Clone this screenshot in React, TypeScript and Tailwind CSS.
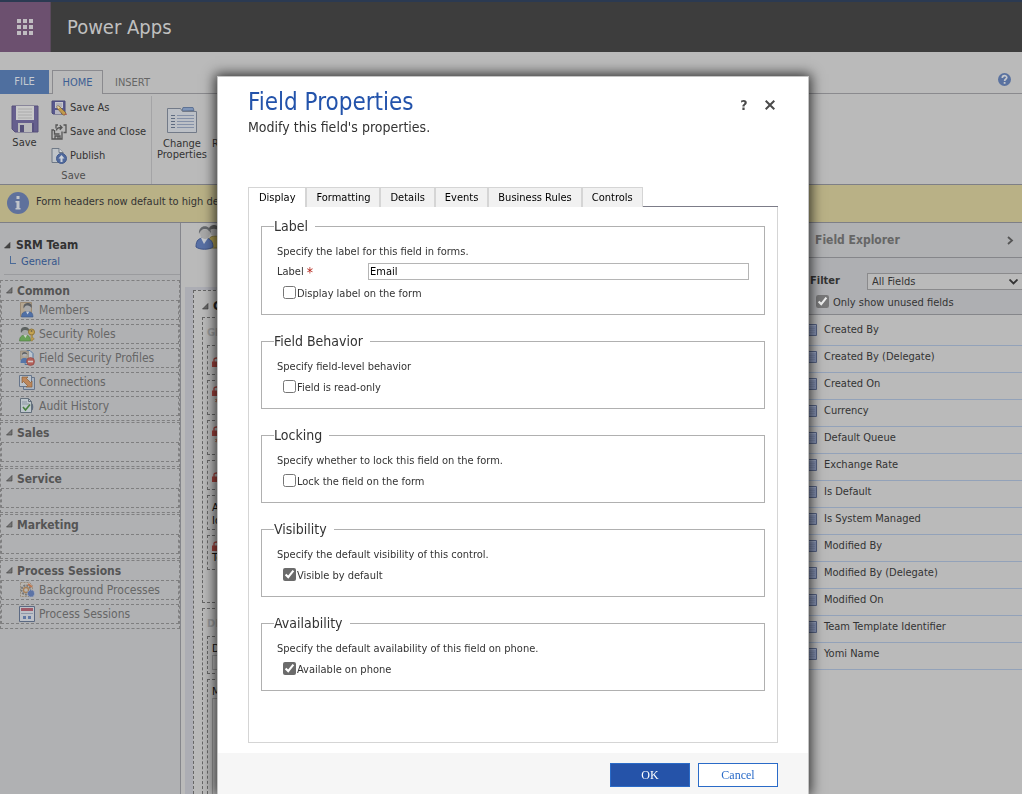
import type { ReactNode } from "react";

type IconProps = { className?: string };

const WaffleIcon = () => (
  <svg width="16" height="16" viewBox="0 0 16 16" fill="#c0bcc1" aria-hidden="true">
    {[0, 6, 12].map((y) => [0, 6, 12].map((x) => <rect key={`${x}-${y}`} x={x} y={y} width="4" height="4" />))}
  </svg>
);

const SaveIcon = () => (
  <svg width="28" height="28" viewBox="0 0 28 28" aria-hidden="true">
    <path d="M1 1h26v26H4l-3-3z" fill="#665f8e" stroke="#57517b" />
    <rect x="5" y="1" width="18" height="14" fill="#c9c9c9" />
    <path d="M7 4h14M7 7h14M7 10h14M7 13h14" stroke="#aaa" />
    <rect x="7" y="18" width="14" height="9" fill="#b9b9bb" />
    <rect x="9" y="20" width="4" height="7" fill="#55507a" />
    <path d="M22 18v9" stroke="#4b4570" />
  </svg>
);

const SaveAsIcon = () => (
  <svg width="16" height="16" viewBox="0 0 16 16" aria-hidden="true">
    <path d="M1 1h13v13H2l-1-1z" fill="#58588f" stroke="#4a4a78" />
    <rect x="4" y="2" width="8" height="6" fill="#c6c6cc" />
    <path d="M5 4h6M5 6h6" stroke="#9a9aa8" />
    <rect x="4" y="10" width="6" height="4" fill="#b5b5c0" />
    <path d="M6 6l2 0 7 7-1 2-2 0-6-7z" fill="#c29a4c" stroke="#77603a" strokeWidth=".7" />
    <path d="M6 6l3 1-2 2z" fill="#ddd1b4" />
    <path d="M13 15l2-2 1 2z" fill="#a95c55" />
  </svg>
);

const SaveCloseIcon = () => (
  <svg width="16" height="16" viewBox="0 0 16 16" fill="none" stroke="#555" strokeWidth="1.3" aria-hidden="true">
    <path d="M3 6H1v9h10V7.500M3.500 6v4h5M4 15v-3h5v3M7 12.500v2" />
    <path d="M5 4.500V1h2M12.500 1H15v7.500h-2.500" />
    <path d="M5.500 6.500c0-2.500 2-3 5-3M8.800 1.300l2.200 2.200-2.200 2.200" />
  </svg>
);

const PublishIcon = () => (
  <svg width="16" height="16" viewBox="0 0 16 16" aria-hidden="true">
    <path d="M1 .5h7l4 4v10H1z" fill="#bfc4c9" stroke="#6f7986" />
    <path d="M8 .5v4h4" fill="#d3d6da" stroke="#6f7986" />
    <circle cx="10.500" cy="10.500" r="5" fill="#50699d" stroke="#435b8c" />
    <path d="M10.500 7l3 3.500h-2V14h-2v-3.500h-2z" fill="#ccd2db" />
  </svg>
);

const ChangeIcon = () => (
  <svg width="30" height="28" viewBox="0 0 30 28" aria-hidden="true">
    <path d="M15 5l1-3.500h10l1 3z" fill="#7f95b8" stroke="#5f7394" />
    <path d="M.5 2.500h13l2 3h14v21H.5z" fill="#bcc0c6" stroke="#727a88" />
    <path d="M10 9.500h17M10 12.500h17M10 15.500h17M10 18.500h17M10 21.500h17" stroke="#8591a8" />
    <path d="M4 9.500h4M4 12.500h4M4 15.500h4M4 18.500h4M4 21.500h4" stroke="#5e6b80" />
  </svg>
);

const InfoIcon = () => (
  <svg width="22" height="22" viewBox="0 0 22 22" aria-hidden="true">
    <circle cx="11" cy="11" r="11" fill="#5f719c" />
    <rect x="9.500" y="4" width="3" height="3" fill="#c2c5ca" />
    <path d="M8.500 9h4v7h1v1.500h-5V16h1v-5.500h-1z" fill="#c2c5ca" />
  </svg>
);

const HelpIcon = () => (
  <svg width="13" height="13" viewBox="0 0 13 13" aria-hidden="true">
    <circle cx="6.500" cy="6.500" r="6.500" fill="#5a72a0" />
    <path d="M4.300 5c0-3 4.500-3 4.500-.4C8.800 6 6.600 6 6.600 8" fill="none" stroke="#c5c8cd" strokeWidth="1.700" />
    <rect x="5.700" y="9" width="1.800" height="1.800" fill="#c5c8cd" />
  </svg>
);

const Caret = ({ className }: IconProps) => (
  <svg width="7" height="7" viewBox="0 0 7 7" className={className} aria-hidden="true">
    <path d="M6 .5V6H.5z" fill="currentColor" stroke="#3b3b3b" strokeWidth=".6" />
  </svg>
);

const MembersIcon = () => (
  <svg width="16" height="16" viewBox="0 0 16 16" aria-hidden="true">
    <path d="M1.500.5h11v14h-11z" fill="#b4a691" stroke="#9b8b75" />
    <path d="M2.500 15c0-5 3-5.500 6-5.500s5.500 1 5.500 5.500z" fill="#5070a6" stroke="#405a88" strokeWidth=".6" />
    <path d="M7 9.500l1.500 3 2-3z" fill="#cbd0d8" />
    <circle cx="8.500" cy="6" r="3.300" fill="#a8a9aa" />
    <path d="M4.500 6.500C4 1.500 7 1 9 1s4.500 1 3.500 5c-1-2-3-2.500-5-2.500-1 0-1.500 1-3 3z" fill="#5d6063" />
  </svg>
);

const SecurityIcon = () => (
  <svg width="16" height="16" viewBox="0 0 16 16" aria-hidden="true">
    <path d="M.5 15c0-5 3-6 6-6s5 2 5 6z" fill="#6aa158" stroke="#4c7a40" strokeWidth=".6" />
    <path d="M4.500 9l2 3 1.500-3z" fill="#cbd3c8" />
    <circle cx="6" cy="6" r="3.200" fill="#a5a7a7" />
    <path d="M2 7C1 1.500 4 1 6 1s5 1 4 5c-1-2-3-2-4.500-2S3 5.500 2 7z" fill="#5d6260" />
    <circle cx="12.500" cy="6" r="3" fill="#c4a352" stroke="#8f773a" />
    <circle cx="12.500" cy="5" r="1" fill="#776a48" />
    <path d="M12 9v6h1.500v-1.500h1.500V12h-1.500V9z" fill="#c4a352" stroke="#8f773a" strokeWidth=".5" />
  </svg>
);

const ProfileIcon = () => (
  <svg width="16" height="16" viewBox="0 0 16 16" aria-hidden="true">
    <path d="M8 .5h3l3 3v11H6z" fill="#bcc5cf" stroke="#55779f" />
    <path d="M1.500 1h8v9h-8z" fill="#a99f90" stroke="#8f8473" strokeWidth=".6" />
    <circle cx="5.500" cy="4.500" r="2.300" fill="#aeb0b1" />
    <path d="M3 5c-.5-4 5-4 5.500-.5-2-1-4-1-5.500.5z" fill="#5c6064" />
    <path d="M1.500 13c0-4 1.500-5 4-5s4 1 4 5z" fill="#5575a8" />
    <circle cx="11.500" cy="11.500" r="4" fill="#b2605a" stroke="#91453f" strokeWidth=".6" />
    <path d="M9 11.500h5" stroke="#d3cbca" strokeWidth="1.600" />
  </svg>
);

const ConnectionsIcon = () => (
  <svg width="16" height="16" viewBox="0 0 16 16" aria-hidden="true">
    <path d="M4.500 3.500h11v12h-11z" fill="#aab4c1" stroke="#66758b" />
    <path d="M.5 1.500h12v11H.5z" fill="#bcc2c9" stroke="#66758b" />
    <path d="M3 3h6l-1.500 1.500 4 4L13 7v6H7l1.500-1.500-4-4L3 9z" fill="#bd875b" stroke="#875b38" strokeWidth=".7" />
  </svg>
);

const AuditIcon = () => (
  <svg width="16" height="16" viewBox="0 0 16 16" aria-hidden="true">
    <path d="M10 4c5 0 5 10 0 10z" fill="#7d8ba0" stroke="#536276" />
    <path d="M1.500.5h8l3 3v11h-11z" fill="#bdc6cc" stroke="#64707c" />
    <path d="M9.500.5v3h3" fill="none" stroke="#64707c" />
    <path d="M3 4h5M3 6h7" stroke="#8b97a3" />
    <path d="M4 9l2.500 3L11 6.500" fill="none" stroke="#47803f" strokeWidth="1.600" />
  </svg>
);

const ProcessIcon = () => (
  <svg width="16" height="16" viewBox="0 0 16 16" aria-hidden="true">
    <path d="M1.500.5h9l3 3v11h-12z" fill="#b8b5b0" stroke="#998c7c" strokeDasharray="2 1" />
    <circle cx="7" cy="8" r="4.500" fill="none" stroke="#777" strokeWidth="2" strokeDasharray="2 1" />
    <circle cx="7" cy="8" r="2.500" fill="none" stroke="#a78057" strokeWidth="1.300" />
    <path d="M9 2l4 3" stroke="#bd7650" strokeWidth="2" />
    <circle cx="12" cy="11.500" r="3.500" fill="#5c73a6" stroke="#aeb6c7" strokeWidth="1" strokeDasharray="1 1" />
  </svg>
);

const SessionsIcon = () => (
  <svg width="16" height="16" viewBox="0 0 16 16" aria-hidden="true">
    <path d="M.5.5h15v15H.5z" fill="#bdc1c8" stroke="#5c6a83" />
    <path d="M2 2h12v3H2z" fill="#a05a68" />
    <path d="M2 7.500h12" stroke="#8e98aa" />
    <path d="M4 10h3v3H4zM9 10h3v3H9z" fill="#6179a4" />
  </svg>
);

const PeopleIcon = () => (
  <svg width="32" height="30" viewBox="0 0 32 30" aria-hidden="true">
    <path d="M12 25c0-9 3-12 8-12s8 3 8 12z" fill="#aa9a50" stroke="#80743e" />
    <circle cx="19" cy="8" r="4.500" fill="#a5a5a5" />
    <path d="M13.500 8c0-8 11-8 11 0-4-3-7-3-11 0z" fill="#5b5b5b" />
    <path d="M1 24c0-7 3-9 8-9s9 2 9 9c-4 3-13 3-17 0z" fill="#5870a5" stroke="#3f5488" />
    <path d="M6 15l3 6 4-6z" fill="#c7cbd2" />
    <path d="M5 9c0-3 10-3 10 1 0 3-2 6-5 6s-5-3-5-7z" fill="#a9a9a9" />
    <path d="M4 11C3 1 16 1 16 10c-2-2-3-4-6-4-3 0-5 2-6 5z" fill="#66696d" />
  </svg>
);

const FieldIcon = () => (
  <svg width="14" height="12" viewBox="0 0 14 12" aria-hidden="true">
    <path d="M.5.5h13v11H.5z" fill="#8793b4" stroke="#566384" />
    <path d="M1 4.500h11M1 6.500h11M1 8.500h11" stroke="#7c89aa" />
    <path d="M1 1.500h12" stroke="#9ca7c2" />
  </svg>
);

const LockIcon = () => (
  <svg width="9" height="10" viewBox="0 0 9 10" className="shrink-0" aria-hidden="true">
    <path d="M2 5V2.500C2 .5 7 .5 7 2.500V5" fill="none" stroke="#a3433d" strokeWidth="1.300" />
    <rect x="0" y="4.500" width="9" height="5.500" fill="#a3433d" />
  </svg>
);

const navGroups: { title: string; items: { name: string; icon: ReactNode }[] }[] = [
  {
    title: "Common",
    items: [
      { name: "Members", icon: <MembersIcon /> },
      { name: "Security Roles", icon: <SecurityIcon /> },
      { name: "Field Security Profiles", icon: <ProfileIcon /> },
      { name: "Connections", icon: <ConnectionsIcon /> },
      { name: "Audit History", icon: <AuditIcon /> },
    ],
  },
  { title: "Sales", items: [] },
  { title: "Service", items: [] },
  { title: "Marketing", items: [] },
  {
    title: "Process Sessions",
    items: [
      { name: "Background Processes", icon: <ProcessIcon /> },
      { name: "Process Sessions", icon: <SessionsIcon /> },
    ],
  },
];

const fields = [
  "Created By",
  "Created By (Delegate)",
  "Created On",
  "Currency",
  "Default Queue",
  "Exchange Rate",
  "Is Default",
  "Is System Managed",
  "Modified By",
  "Modified By (Delegate)",
  "Modified On",
  "Team Template Identifier",
  "Yomi Name",
];

const tabs = ["Display", "Formatting", "Details", "Events", "Business Rules", "Controls"];

const Header = () => (
  <header className="flex h-[52px] shrink-0 border-t-2 border-[#2b3a52] bg-[#3d3d3d]">
    <button aria-label="App launcher" className="flex w-[51px] items-center justify-center border-r border-[#5a4a5c] bg-[#6c506f]">
      <WaffleIcon />
    </button>
    <span className="flex items-center pl-4 text-[20px] text-[#c0c0c0]">Power Apps</span>
  </header>
);

const SmallAction = ({ icon, label }: { icon: ReactNode; label: string }) => (
  <button className="flex h-6 items-center gap-[3px] whitespace-nowrap">
    {icon}
    {label}
  </button>
);

const Ribbon = () => (
  <div className="flex h-[132px] shrink-0 flex-col pt-[18px] text-[11px] text-[#333]">
    <div className="flex h-6 shrink-0">
      <button className="w-[49px] bg-[#4f6f9f] pt-px text-[#c5cad1]">FILE</button>
      <span className="w-[3px] border-b border-[#8a8a8e]" />
      <button className="w-[51px] border-x border-t border-[#8a8a8e] pt-px text-[#3d5f94]">HOME</button>
      <button className="border-b border-[#8a8a8e] px-3 pt-1 text-[#666]">INSERT</button>
      <span className="flex flex-1 items-start justify-end border-b border-[#8a8a8e] pt-[3px] pr-[11px]">
        <button aria-label="Help">
          <HelpIcon />
        </button>
      </span>
    </div>
    <div className="flex flex-1 pt-[2px]">
      <div className="flex w-[152px] flex-col border-r border-[#a4a4a6]">
        <div className="flex">
          <button className="flex w-[49px] flex-col items-center gap-1 pt-[9px]">
            <SaveIcon />
            <span className="leading-3">Save</span>
          </button>
          <div className="flex flex-col pl-[2px]">
            <SmallAction icon={<SaveAsIcon />} label="Save As" />
            <SmallAction icon={<SaveCloseIcon />} label="Save and Close" />
            <SmallAction icon={<PublishIcon />} label="Publish" />
          </div>
        </div>
        <span className="pr-1 text-center leading-4 text-[#4f4f4f]">Save</span>
      </div>
      <button className="flex w-[60px] flex-col items-center gap-1 self-start pt-[10px]">
        <ChangeIcon />
        <span className="leading-[11px]">Change Properties</span>
      </button>
      <button className="flex w-10 flex-col items-center gap-1 self-start pt-[10px]">
        <ChangeIcon />
        <span className="leading-[11px]">Remove</span>
      </button>
    </div>
  </div>
);

const Sidebar = () => (
  <nav className="w-[181px] shrink-0 border-r border-[#85868c] bg-[#b0b1b3]">
    <div className="ml-1 h-[52px] border-b border-[#9a9b9e] pt-[14px]">
      <div className="flex items-center gap-[5px] text-[12px] leading-4 font-bold text-[#333]">
        <Caret className="text-[#444]" />
        SRM Team
      </div>
      <a href="#general" className="ml-[6px] flex items-center gap-[5px] pt-px text-[11px] leading-4 text-[#34568c]">
        <span className="mb-1 h-2 w-[6px] border-b border-l border-[#4a6a98]" />
        General
      </a>
    </div>
    <div className="h-[5px]" />
    {navGroups.map((group) => (
      <section key={group.title} className="mb-px border border-dashed border-[#7f7f80]">
        <h3 className="flex h-[19px] items-center gap-1 pl-[5px] text-[12px] font-bold text-[#555]">
          <Caret className="text-[#777]" />
          {group.title}
        </h3>
        {group.items.length === 0 && <div className="mb-1 h-5 border border-dashed border-[#7f7f80]" />}
        {group.items.map((item) => (
          <a
            key={item.name}
            href="#item"
            className="mb-1 flex h-5 items-center gap-1 border border-dashed border-[#7f7f80] pl-[17px] text-[12px] whitespace-nowrap text-[#666]"
          >
            {item.icon}
            {item.name}
          </a>
        ))}
      </section>
    ))}
  </nav>
);

const FormField = ({ locked, children }: { locked?: boolean; children?: ReactNode }) => (
  <div
    className={
      children
        ? "flex h-[35px] flex-col overflow-hidden border border-dashed border-[#666] pt-[5px] pl-1 text-[11px] leading-[13px] text-[#111]"
        : "flex h-[30px] flex-col justify-center border border-dashed border-[#666] pt-1 pl-1"
    }
  >
    {locked && <LockIcon />}
    {children}
  </div>
);

const Required = () => <span className="pl-[3px] text-[#a02018]">*</span>;

const Canvas = () => (
  <main className="flex min-w-0 flex-1 flex-col pl-1">
    <div className="h-16 pl-[10px]">
      <PeopleIcon />
    </div>
    <div className="flex flex-1 flex-col bg-[#acadb4] pt-[3px] pl-2">
      <div className="flex flex-1 flex-col border-t border-l border-dashed border-[#666] bg-[#bababa] pt-1 pl-2">
        <h2 className="flex h-[22px] items-center gap-1 text-[13px] font-bold text-[#222]">
          <Caret className="text-[#666]" />
          General
        </h2>
        <section className="mb-[5px] flex h-[286px] flex-col gap-[5px] border border-dashed border-[#666] pl-1">
          <h3 className="h-[22px] pt-2 text-[11px] leading-[14px] font-bold text-[#999]">GENERAL</h3>
          <FormField locked />
          <FormField locked>
            <Required />
          </FormField>
          <FormField locked>
            <Required />
          </FormField>
          <FormField locked />
          <FormField>
            Administrator
            <br />
            Identifier
          </FormField>
          <FormField locked>Team Type</FormField>
        </section>
        <section className="flex flex-1 flex-col gap-[5px] border-t border-l border-dashed border-[#666] pl-1">
          <h3 className="h-[22px] pt-2 text-[11px] leading-[14px] font-bold text-[#999]">DETAILS</h3>
          <div className="border border-dashed border-[#666] pt-[5px] pb-[3px] pl-1 text-[11px] leading-[13px] text-[#111]">
            Description
            <div className="h-[15px] border border-[#949494]" />
          </div>
          <div className="flex flex-1 flex-col border-t border-l border-dashed border-[#666] pt-[5px] pl-1 text-[11px] leading-[13px] text-[#111]">
            Members
            <div className="flex-1 border-t border-l border-[#949494]" />
          </div>
        </section>
      </div>
    </div>
  </main>
);

const Explorer = () => (
  <aside className="w-[222px] shrink-0 text-[11px] text-[#333]">
    <div className="flex h-[35px] items-center justify-between border-b border-[#85868a] bg-[#b0b1b3] pr-2 pl-[15px]">
      <h2 className="text-[12px] font-bold text-[#666]">Field Explorer</h2>
      <button aria-label="Collapse">
        <svg width="7" height="9" viewBox="0 0 7 9" fill="none" stroke="#555" strokeWidth="1.800" aria-hidden="true">
          <path d="M1 1l4 3.500L1 8" />
        </svg>
      </button>
    </div>
    <div className="h-[57px] border-b border-[#85868a] bg-[#aeafb2] pt-[15px] pl-[10px]">
      <div className="flex items-center">
        <label htmlFor="filter" className="w-[57px] font-bold">
          Filter
        </label>
        <div className="relative flex-1">
          <select id="filter" defaultValue="all" className="block h-[17px] w-full appearance-none border border-r-0 border-[#8a8a8c] bg-[#bababa] pl-1">
            <option value="all">All Fields</option>
          </select>
          <svg width="9" height="6" viewBox="0 0 9 6" fill="none" stroke="#333" strokeWidth="1.800" className="pointer-events-none absolute top-[6px] right-1" aria-hidden="true">
            <path d="M.5.5l4 4 4-4" />
          </svg>
        </div>
      </div>
      <label className="flex items-start gap-1 pt-[5px] pl-[6px] leading-4">
        <input type="checkbox" defaultChecked className="size-[13px] accent-[#6b6b6b] opacity-80" />
        Only show unused fields
      </label>
    </div>
    <ul className="pt-1">
      {fields.map((name) => (
        <li key={name} className="flex h-[27px] items-start gap-[7px] border-b border-[#93a2b9] pt-1 pl-[3px] leading-[13px]">
          <span className="pt-px">
            <FieldIcon />
          </span>
          {name}
        </li>
      ))}
    </ul>
  </aside>
);

const Group = ({ title, hint, option, checked, children }: { title: string; hint: string; option: string; checked?: boolean; children?: ReactNode }) => (
  <fieldset className="mx-3 mb-[18px] border border-[#b0b0b0] pb-3 pl-[15px]">
    <legend className="-ml-[3px] pr-[7px] text-[14px] leading-4">{title}</legend>
    <p className="pt-[11px] leading-[14px]">{hint}</p>
    {children}
    <label className="flex items-start gap-px pt-[6px] pl-[6px] leading-4">
      <input type="checkbox" defaultChecked={checked} className="size-[13px] accent-[#6b6b6b]" />
      {option}
    </label>
  </fieldset>
);

const Dialog = () => (
  <div
    role="dialog"
    aria-label="Field Properties"
    className="flex w-full max-w-[592px] flex-col border border-b-0 border-[#c4c4c4] bg-white text-[11px] text-[#333] shadow-[0_0_12px_2px_rgba(0,0,0,0.75)]"
  >
    <div className="flex min-h-0 flex-1 flex-col px-[30px] pt-[10px] pb-[10px]">
      <div className="flex h-[100px] shrink-0 items-start justify-between">
        <div>
          <h1 className="text-[24px] leading-[31px] text-[#2353ab]">Field Properties</h1>
          <p className="text-[14px] leading-[18px]">Modify this field's properties.</p>
        </div>
        <div className="flex items-center gap-[10px] pt-[10px]">
          <button aria-label="Help" className="w-4 text-[14px] leading-4 font-bold text-[#4a4a4a]">
            ?
          </button>
          <button aria-label="Close" className="flex size-4 items-center justify-center">
            <svg width="10" height="10" viewBox="0 0 10 10" stroke="#4a4a4a" strokeWidth="2" aria-hidden="true">
              <path d="M.7.7l8.600 8.600M9.300.7L.7 9.300" />
            </svg>
          </button>
        </div>
      </div>
      <div role="tablist" className="flex h-5 shrink-0 text-black">
        {tabs.map((tab, i) => (
          <button
            key={tab}
            role="tab"
            aria-selected={i === 0}
            className={
              i === 0
                ? "border-t border-l border-[#d5d5d5] bg-white px-[10px] pt-px whitespace-nowrap"
                : "border-t border-l-2 border-[#d5d5d5] bg-[#f1f1f1] px-[9px] pt-px whitespace-nowrap last-of-type:border-r"
            }
          >
            {tab}
          </button>
        ))}
        <span className="flex-1 border-b border-[#7c7c88]" />
      </div>
      <div role="tabpanel" className="flex-1 border-x border-b border-[#d5d5d5] pt-[11px]">
        <Group title="Label" hint="Specify the label for this field in forms." option="Display label on the form">
          <div className="flex items-center pt-1 pr-[15px]">
            <label htmlFor="label" className="flex w-[91px] items-center gap-[3px] leading-[14px]">
              Label <span className="text-[14px] text-[#b01c10]">*</span>
            </label>
            <input id="label" defaultValue="Email" className="h-[17px] min-w-0 flex-1 border border-[#b5b5b5] px-px text-black" />
          </div>
        </Group>
        <Group title="Field Behavior" hint="Specify field-level behavior" option="Field is read-only" />
        <Group title="Locking" hint="Specify whether to lock this field on the form." option="Lock the field on the form" />
        <Group title="Visibility" hint="Specify the default visibility of this control." option="Visible by default" checked />
        <Group title="Availability" hint="Specify the default availability of this field on phone." option="Available on phone" checked />
      </div>
    </div>
    <footer className="flex h-[41px] shrink-0 justify-end gap-2 bg-[#f6f6f6] px-[30px] pt-[10px] font-['Liberation_Serif',serif] text-[12px]">
      <button className="h-6 w-20 border border-[#2a6bc8] bg-[#2553a9] text-white">OK</button>
      <button className="h-6 w-20 border border-[#2a6bc8] bg-white text-[#2a6bc8]">Cancel</button>
    </footer>
  </div>
);

export default function App() {
  return (
    <div className="flex min-h-screen flex-col bg-[#bababa] font-['DejaVu_Sans_Condensed','DejaVu_Sans',sans-serif]">
      <Header />
      <Ribbon />
      <div className="flex h-[39px] shrink-0 items-center gap-[7px] border-y border-[#7e7f86] bg-[#b9b186] pb-[2px] pl-[7px] text-[11px] text-[#333]">
        <InfoIcon />
        Form headers now default to high density
      </div>
      <div className="flex flex-1">
        <Sidebar />
        <Canvas />
        <Explorer />
      </div>
      <div className="fixed inset-0 flex justify-center pt-[76px] pl-1">
        <Dialog />
      </div>
    </div>
  );
}
